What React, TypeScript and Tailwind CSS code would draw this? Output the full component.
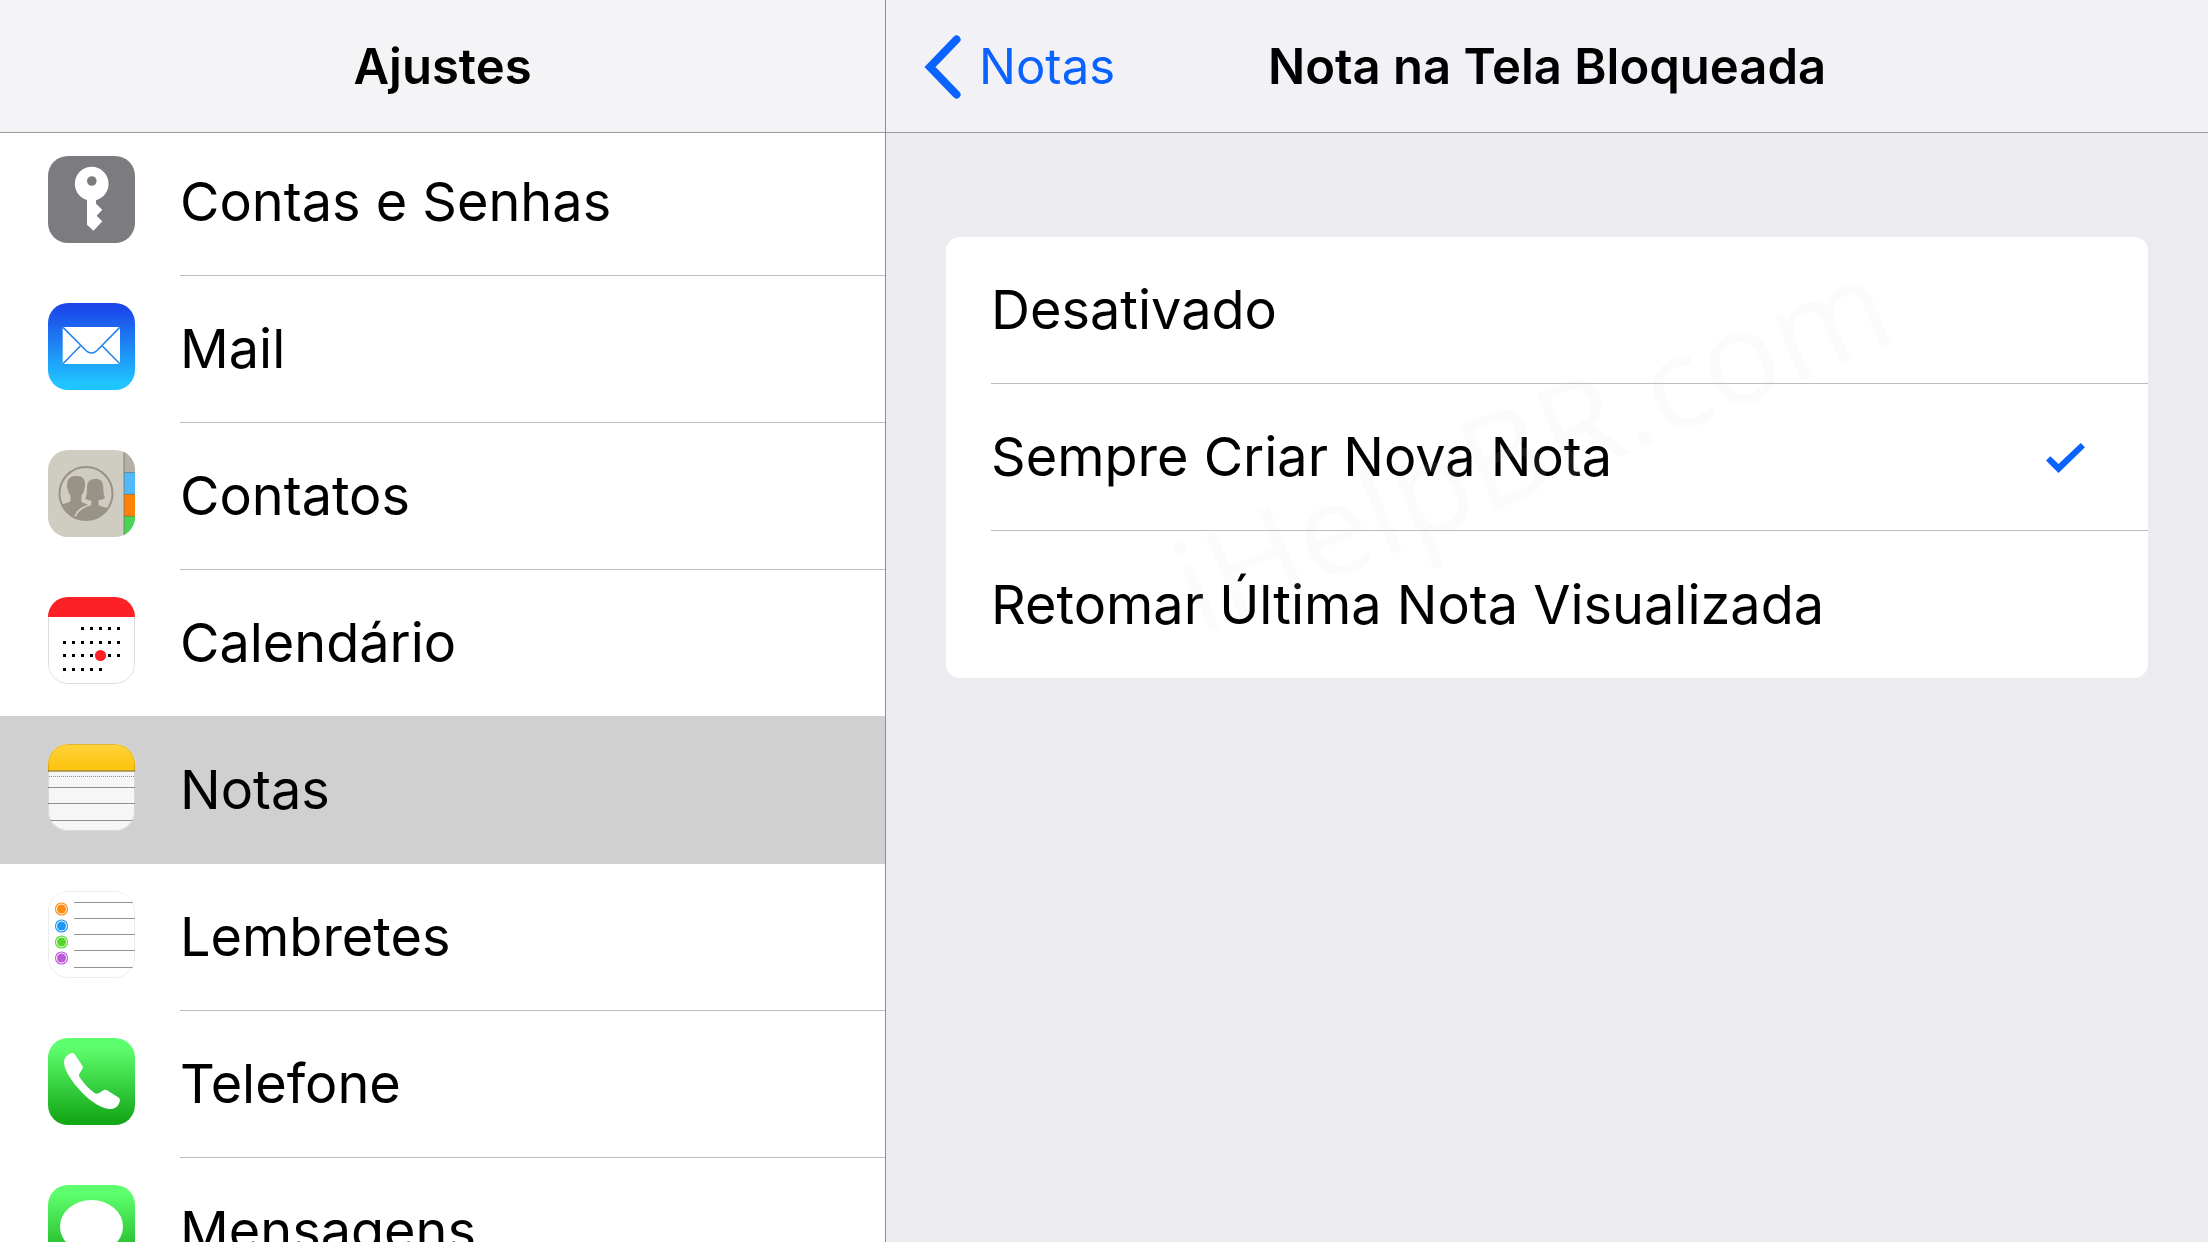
import { useState, type ReactNode } from "react";

interface AppEntry {
  id: string;
  label: string;
  icon: ReactNode;
}

const calendarRows = [
  { y: 31, cols: [2, 3, 4, 5, 6] },
  { y: 45, cols: [0, 1, 2, 3, 4, 5, 6] },
  { y: 58, cols: [0, 1, 2, 3, 5, 6] },
  { y: 72, cols: [0, 1, 2, 3, 4] },
];

const reminderDots = [
  { y: 18, color: "#ff8a12" },
  { y: 35, color: "#1f97f5" },
  { y: 51, color: "#55d62f" },
  { y: 67, color: "#bd58d8" },
];

function AppIcon({ children }: { children: ReactNode }) {
  return (
    <svg
      viewBox="0 0 87 87"
      className="mt-[27px] size-[87px] shrink-0 rounded-[20px]"
      aria-hidden="true"
    >
      {children}
    </svg>
  );
}

function KeyIcon() {
  return (
    <AppIcon>
      <rect width="87" height="87" fill="#7c7b80" />
      <path
        fill="#fff"
        fillRule="evenodd"
        d="M44 10.8a17 17 0 0 1 4 33.4v3.5l6.3 6-5.7 6 5.7 5.6-8.8 9.4-6.5-6V44.1a17 17 0 0 1 5-33.3Zm-.2 9.4a4.8 4.8 0 1 0 0 9.6 4.8 4.8 0 0 0 0-9.6Z"
      />
    </AppIcon>
  );
}

function MailIcon() {
  return (
    <AppIcon>
      <defs>
        <linearGradient id="mail-bg" x1="0" y1="0" x2="0" y2="1">
          <stop offset="0.05" stopColor="#1b46ea" />
          <stop offset="0.92" stopColor="#20c4ff" />
        </linearGradient>
      </defs>
      <rect width="87" height="87" fill="url(#mail-bg)" />
      <rect x="14.7" y="24" width="57.3" height="37" rx="0.8" fill="#fff" />
      <g fill="none" stroke="#2384ee" strokeWidth="1.6">
        <path d="M15 24.4 36.5 46q7 8 14 0L71.8 24.4" />
        <path d="M15 60.7 32.3 43M71.8 60.7 54.3 43" />
      </g>
    </AppIcon>
  );
}

function ContactsIcon() {
  return (
    <AppIcon>
      <defs>
        <clipPath id="contacts-disc">
          <circle cx="38" cy="43.5" r="26" />
        </clipPath>
      </defs>
      <rect width="87" height="87" fill="#cfccc1" />
      <rect x="76" width="11" height="22.5" fill="#b5b0a6" />
      <rect x="76" y="22.5" width="11" height="22" fill="#51b9fb" />
      <rect x="76" y="44.3" width="11" height="22" fill="#ff8206" />
      <rect x="76" y="66.3" width="11" height="21" fill="#49d455" />
      <path d="M76 22.5h11M76 44.3h11M76 66.3h11" stroke="#000" strokeOpacity="0.25" />
      <path d="M76 0v87" stroke="#77736b" strokeWidth="0.8" />
      <g clipPath="url(#contacts-disc)" fill="#989287">
        <path d="M28 26c6-.6 9.5 3 9 8.5 0 1.5.2 3-.6 4.5-.5 3-1.6 5-3 6.5v6c1 1.5 4 2.2 7 3.2L28 72H8V56c5-2 12-2.5 14.5-5v-5.5c-1.5-2-2.5-4-2.8-6.5-1-1.5-.7-3-.4-4.3C18.8 29 22.5 26 28 26Z" />
        <path
          d="M47 28c6-.5 9.2 3.5 9.2 9 0 5 .4 9 1.8 11-1.5 2-4 2.6-6.6 3v3.5c4 2.5 10 2.5 14.6 4V76H26c0-12 3-17 16.5-21.5V51.500c-2.500-.5-5-1-6.2-2.800 2-3.500 1.700-7 1.900-11.700 0-6 3-9 8.800-9Z"
          stroke="#cfccc1"
          strokeWidth="1.8"
        />
      </g>
      <circle cx="38" cy="43.5" r="26.5" fill="none" stroke="#989287" strokeWidth="2" />
    </AppIcon>
  );
}

function CalendarIcon() {
  return (
    <AppIcon>
      <rect x="0.5" y="0.5" width="86" height="86" rx="19.5" fill="#fff" stroke="#dcdcdc" />
      <rect width="87" height="20" fill="#fc2126" />
      {calendarRows.map((row) =>
        row.cols.map((col) => (
          <rect key={`${row.y}-${col}`} x={15 + col * 9} y={row.y - 1} width="3" height="3" />
        ))
      )}
      <circle cx="52.5" cy="58.5" r="5.6" fill="#fc2126" />
    </AppIcon>
  );
}

function NotesIcon() {
  return (
    <AppIcon>
      <defs>
        <linearGradient id="notes-top" x1="0" y1="0" x2="0" y2="1">
          <stop offset="0" stopColor="#ffd33a" />
          <stop offset="1" stopColor="#fdc30c" />
        </linearGradient>
      </defs>
      <rect width="87" height="87" fill="#f6f6f6" />
      <rect width="87" height="27" fill="url(#notes-top)" />
      <path d="M0 27h87" stroke="#a08a3c" strokeWidth="1.5" />
      <path d="M1 32.5h86" stroke="#8a8a8a" strokeDasharray="1 1" />
      <path d="M0 43.5h87M0 59.5h87M0 76.5h87" stroke="#929292" />
      <rect x="0.5" y="0.5" width="86" height="86" rx="19.5" fill="none" stroke="#000" strokeOpacity="0.12" />
    </AppIcon>
  );
}

function RemindersIcon() {
  return (
    <AppIcon>
      <rect x="0.5" y="0.5" width="86" height="86" rx="19.5" fill="#fff" stroke="#ececec" />
      {reminderDots.map((dot) => (
        <g key={dot.y}>
          <circle cx="13.5" cy={dot.y} r="6" fill="none" stroke={dot.color} strokeWidth="1.1" />
          <circle cx="13.5" cy={dot.y} r="4.5" fill={dot.color} />
        </g>
      ))}
      <path d="M26 11.5h59M26 27.5h61M26 43.5h61M26 59.5h61M26 76.5h59" stroke="#929292" />
    </AppIcon>
  );
}

function PhoneIcon() {
  return (
    <AppIcon>
      <defs>
        <linearGradient id="phone-bg" x1="0" y1="0" x2="0" y2="1">
          <stop offset="0.1" stopColor="#5eff6e" />
          <stop offset="0.95" stopColor="#14a718" />
        </linearGradient>
      </defs>
      <rect width="87" height="87" fill="url(#phone-bg)" />
      <path
        fill="#fff"
        d="M21 16.3C23.5 14.7 25.5 14.6 26.7 16.3L34.2 27.5C35.1 29 35 30 34 31.5L31.3 36C30.7 37.3 31 38.5 31.8 39.5C35.5 45 40.5 50.5 46.5 55C48 56 49.5 56 51 55L55.5 52.3C57 51.5 58.3 51.7 59.5 52.5L70.5 59.5C72 60.5 72.3 61.5 71.7 63.5C70 69 67 71 62.5 71C55 71 44 65 34 54.5C23.5 43.5 16 31.5 16 24.5C16 21 17.5 18.5 21 16.3Z"
      />
    </AppIcon>
  );
}

function MessagesIcon() {
  return (
    <AppIcon>
      <defs>
        <linearGradient id="messages-bg" x1="0" y1="0" x2="0" y2="1">
          <stop offset="0.1" stopColor="#5eff6e" />
          <stop offset="0.95" stopColor="#14a718" />
        </linearGradient>
      </defs>
      <rect width="87" height="87" fill="url(#messages-bg)" />
      <ellipse cx="43.5" cy="41.5" rx="31.5" ry="26.5" fill="#fff" />
      <path d="M24 58c0 6-2 9-6 12 7 0 12-2 15-6Z" fill="#fff" />
    </AppIcon>
  );
}

const entries: AppEntry[] = [
  { id: "contas", label: "Contas e Senhas", icon: <KeyIcon /> },
  { id: "mail", label: "Mail", icon: <MailIcon /> },
  { id: "contatos", label: "Contatos", icon: <ContactsIcon /> },
  { id: "calendario", label: "Calendário", icon: <CalendarIcon /> },
  { id: "notas", label: "Notas", icon: <NotesIcon /> },
  { id: "lembretes", label: "Lembretes", icon: <RemindersIcon /> },
  { id: "telefone", label: "Telefone", icon: <PhoneIcon /> },
  { id: "mensagens", label: "Mensagens", icon: <MessagesIcon /> },
];

const lockScreenOptions = [
  "Desativado",
  "Sempre Criar Nova Nota",
  "Retomar Última Nota Visualizada",
];

function Sidebar() {
  const [active, setActive] = useState("notas");

  return (
    <aside className="flex w-[40.13%] shrink-0 flex-col border-r border-[#8e8e93] bg-white">
      <header className="z-10 flex h-[133px] shrink-0 items-center justify-center border-b border-[#9b9b9f] bg-[#f4f4f6] pt-0.5">
        <h1 className="text-[49px] leading-[60px] font-semibold">Ajustes</h1>
      </header>
      {/* the list is scrolled slightly under the bar */}
      <nav className="-mt-1 min-h-0 flex-1 overflow-hidden">
        {entries.map((entry) => {
          const selected = entry.id === active;
          return (
            <a
              key={entry.id}
              href={`#${entry.id}`}
              onClick={() => setActive(entry.id)}
              aria-current={selected ? "page" : undefined}
              className={`flex h-[147px] gap-[45px] pl-12 ${
                selected ? "relative bg-[#d0d0d0] shadow-[0_-1px_0_#d0d0d0]" : ""
              }`}
            >
              {entry.icon}
              <span
                className={`flex flex-1 items-center border-b text-[54px] leading-[66px] ${
                  selected ? "border-[#d0d0d0]" : "border-[#bcbcbf]"
                }`}
              >
                {entry.label}
              </span>
            </a>
          );
        })}
      </nav>
    </aside>
  );
}

function LockScreenNote() {
  const [choice, setChoice] = useState("Sempre Criar Nova Nota");

  return (
    <main className="flex min-w-0 flex-1 flex-col bg-[#ebebf0]">
      <header className="grid h-[133px] shrink-0 grid-cols-[1fr_auto_1fr] items-center border-b border-[#9b9b9f] bg-[#f2f2f6] pt-0.5">
        <a href="#notas" className="flex items-center gap-[17px] pl-[38px] text-[#0a62ff]">
          <svg viewBox="0 0 38 64" className="h-[64px] w-[38px]" aria-hidden="true">
            <path
              d="M32.5 4.5 6 32l26.5 27.5"
              fill="none"
              stroke="currentColor"
              strokeWidth="8"
              strokeLinecap="round"
            />
          </svg>
          <span className="text-[49px] leading-[60px]">Notas</span>
        </a>
        <h2 id="lock-screen-title" className="text-[49px] leading-[60px] font-semibold">
          Nota na Tela Bloqueada
        </h2>
      </header>

      <fieldset
        aria-labelledby="lock-screen-title"
        className="relative mx-[60px] mt-[104px] overflow-hidden rounded-[14px] bg-white"
      >
        {lockScreenOptions.map((option, index) => (
          <label key={option} className="relative flex h-[147px] pl-[45px]">
            <input
              type="radio"
              name="lock-screen-note"
              className="sr-only"
              checked={choice === option}
              onChange={() => setChoice(option)}
            />
            <span
              className={`flex flex-1 items-center justify-between pr-[63px] text-[54px] leading-[66px] ${
                index < lockScreenOptions.length - 1 ? "border-b border-[#bcbcbf]" : ""
              }`}
            >
              {option}
              {choice === option && (
                <svg viewBox="0 0 39 32" className="h-8 w-[39px]" aria-hidden="true">
                  <path fill="#0a62ff" d="M0 19.5 4.3 15.2 12.5 23 34.7 2 39 6.3 12.5 32Z" />
                </svg>
              )}
            </span>
          </label>
        ))}
        {/* watermark */}
        <div
          className="pointer-events-none absolute inset-0 flex items-center justify-center pr-8 pb-8"
          aria-hidden="true"
        >
          <span className="-rotate-23 font-['Open_Sans',sans-serif] text-[128px] leading-none text-[#d4d4d4]/10">
            iHelpBR.com
          </span>
        </div>
      </fieldset>
    </main>
  );
}

export default function App() {
  return (
    <div className="flex h-screen overflow-hidden font-['Inter','Liberation_Sans',sans-serif] text-black">
      <Sidebar />
      <LockScreenNote />
    </div>
  );
}
